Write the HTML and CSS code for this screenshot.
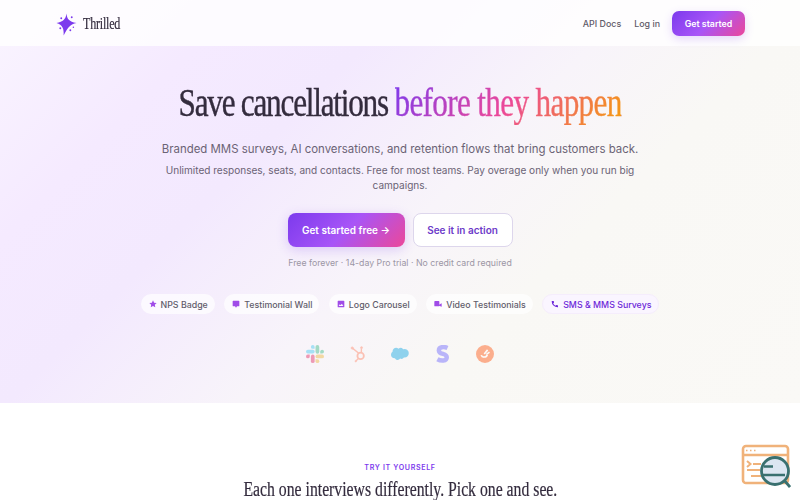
FILE: index.html
```html
<!DOCTYPE html>
<html lang="en">
<head>
  <meta charset="UTF-8" />
  <meta name="viewport" content="width=device-width, initial-scale=1.0" />
  <title>Thrilled</title>
  <link rel="stylesheet" href="styles.css">
</head>
<body>

  <!-- Hero with navigation -->
  <div class="hero-bg">
    <nav class="nav">
      <a class="brand">
        <svg class="brand-icon" viewBox="0 0 22 24" fill="#7c3aed">
          <path d="M11 1C11.700 7 13.500 9.400 21.500 11C15 12.500 12.800 15 8 24C8.400 17 7 13 .5 11C7.500 9.400 10 7.500 11 1Z"/>
          <circle cx="5.500" cy="6" r="1"/>
          <circle cx="16.500" cy="5" r="1"/>
          <circle cx="4.500" cy="16.500" r="1"/>
          <circle cx="15" cy="18.500" r="1"/>
          <circle cx="18.200" cy="15.500" r=".8"/>
        </svg>
        <span class="brand-name">Thrilled</span>
      </a>
      <div class="nav-links">
        <a>API Docs</a>
        <a>Log in</a>
        <a class="btn-small">Get started</a>
      </div>
    </nav>

    <section class="hero">
      <h1><span class="title">Save cancellations <span class="gradient-text">before they happen</span></span></h1>
      <p class="lead">Branded MMS surveys, AI conversations, and retention flows that bring customers back.</p>
      <p class="sub">Unlimited responses, seats, and contacts. Free for most teams. Pay overage only when you run big campaigns.</p>
      <div class="buttons">
        <a class="btn btn-primary">Get started free →</a>
        <a class="btn btn-secondary">See it in action</a>
      </div>
      <p class="note">Free forever · 14-day Pro trial · No credit card required</p>

      <div class="pills">
        <span class="pill">
          <svg viewBox="0 0 24 24"><path d="M12 1l3.300 7.200 7.700.9-5.700 5.300 1.500 7.700L12 18.300 5.200 22.100l1.500-7.700L1 9.100l7.700-.9z"/></svg>
          NPS Badge
        </span>
        <span class="pill">
          <svg viewBox="0 0 24 24"><path d="M4 2h16a2 2 0 0 1 2 2v13a2 2 0 0 1-2 2h-5l-3 4-3-4H4a2 2 0 0 1-2-2V4a2 2 0 0 1 2-2z"/></svg>
          Testimonial Wall
        </span>
        <span class="pill">
          <svg viewBox="0 0 24 24"><path fill-rule="evenodd" d="M4 2h16a2 2 0 0 1 2 2v16a2 2 0 0 1-2 2H4a2 2 0 0 1-2-2V4a2 2 0 0 1 2-2zm1 16h14l-4.500-7-3.500 4.500-2.500-3z"/></svg>
          Logo Carousel
        </span>
        <span class="pill">
          <svg viewBox="0 0 24 24"><path d="M3 3h11a2 2 0 0 1 2 2v12a2 2 0 0 1-2 2H3a2 2 0 0 1-2-2V5a2 2 0 0 1 2-2z"/><path d="M15 14l8-4v10l-8-3z"/></svg>
          Video Testimonials
        </span>
        <span class="pill pill-active">
          <svg viewBox="0 0 24 24"><path d="M6.600 10.800a15 15 0 0 0 6.600 6.600l2.200-2.200a1 1 0 0 1 1-.2c1.100.4 2.300.6 3.600.6a1 1 0 0 1 1 1V21a1 1 0 0 1-1 1A18 18 0 0 1 2 4a1 1 0 0 1 1-1h4.500a1 1 0 0 1 1 1c0 1.300.2 2.500.6 3.600a1 1 0 0 1-.3 1z"/></svg>
          SMS &amp; MMS Surveys
        </span>
      </div>

      <!-- Integrations -->
      <div class="logos">
        <svg viewBox="0 0 24 24">
          <g fill="#36c5f0"><rect x="0" y="6.300" width="11.500" height="5" rx="2.500"/><path d="M9 0a2.500 2.500 0 0 1 2.500 2.500V5H9a2.500 2.500 0 0 1 0-5z"/></g>
          <g fill="#2eb67d"><rect x="12.700" y="0" width="5" height="11.500" rx="2.500"/><path d="M24 8.800a2.500 2.500 0 0 1-2.500 2.500H19V8.800a2.500 2.500 0 0 1 5 0z"/></g>
          <g fill="#ecb22e"><rect x="12.700" y="12.700" width="11.300" height="5" rx="2.500"/><path d="M15.200 24a2.500 2.500 0 0 1-2.500-2.500V19h2.500a2.500 2.500 0 0 1 0 5z"/></g>
          <g fill="#e01e5a"><rect x="6.500" y="12.700" width="5" height="11.300" rx="2.500"/><path d="M0 15.200a2.500 2.500 0 0 1 2.500-2.500H5v2.500a2.500 2.500 0 0 1-5 0z"/></g>
        </svg>
        <svg viewBox="0 0 24 24" fill="none" stroke="#ff7a59">
          <circle cx="15.500" cy="14.500" r="4.300" stroke-width="2.400"/>
          <path d="M5 4.500l8 6.500M16.500 10V4.500M12.500 18l-3 3" stroke-width="1.800"/>
          <circle cx="4.300" cy="4" r="1.500" fill="#ff7a59"/>
          <circle cx="16.700" cy="3.500" r="1.300" fill="#ff7a59"/>
          <circle cx="9" cy="21.500" r="1" fill="#ff7a59"/>
        </svg>
        <svg viewBox="0 0 24 24" fill="#00a1e0">
          <path d="M10 5a4.300 4.300 0 0 1 6.200.6 5.500 5.500 0 0 1 7.500 5.500c0 3.700-3 6.300-6.500 5.600-1 1.800-3.200 2.300-5 1.400-1.600 2.700-5.700 2.500-6.900-.5C2.400 18 0 15.700 0 12.900c0-1.600.8-3 2.100-4C1.700 4.700 6.800 1.700 10 5z"/>
        </svg>
        <svg viewBox="0 0 24 24" fill="none" stroke="#635bff">
          <path d="M18 4C13.500 2 6.500 2 6.500 7.200c0 6 10.500 3.400 10.500 9 0 5.700-8 5.200-12.500 2.800" stroke-width="6"/>
        </svg>
        <svg viewBox="0 0 24 24">
          <circle cx="12" cy="12" r="12" fill="#ff4a00"/>
          <path d="M7 13.500c1 3.500 7 3.500 8-.5M11 12l4.500-5.500M14 12.500l4-3" fill="none" stroke="#fff" stroke-width="2.200"/>
        </svg>
      </div>
    </section>
  </div>

  <!-- Try it section -->
  <section class="try">
    <p class="eyebrow">Try it yourself</p>
    <h2><span class="title">Each one interviews differently. Pick one and see.</span></h2>
  </section>

  <!-- Floating widget -->
  <svg class="widget" viewBox="0 0 50 46">
    <g fill="none" stroke="#f0b27a" stroke-width="2.600">
      <rect x="2" y="2" width="45" height="37" rx="3" fill="#fff"/>
      <path d="M2 11h45"/>
      <path d="M6 17l3.500 3L6 23M12 20h8M6 26h13M10 32h10" stroke-width="2"/>
      <path d="M5 6.500h1.500M9 6.500h1.500M13 6.500h1.500" stroke-width="1.500"/>
    </g>
    <g stroke="#39706f" stroke-width="2.800">
      <path d="M43 36l6 7"/>
      <circle cx="34" cy="27" r="13.500" fill="#dce6f1"/>
      <path d="M23 22.500h9M22 31h22" stroke-width="2.400"/>
    </g>
  </svg>

</body>
</html>
```
FILE: styles.css
```css
* {
  box-sizing: border-box;
}

body {
  margin: 0;
  height: 500px;
  overflow: hidden;
  font-family: Inter, sans-serif;
  background: #fff;
  color: #342c3e;
}

h1, h2, p {
  margin: 0;
}

.hero-bg {
  height: 402.500px;
  background: linear-gradient(135deg, #faf5ff 0%, #f5eaff 20%, #f3e9fe 34%, #f8f4fa 53%, #f9f8f5 68%, #faf9f6 100%);
}

.nav {
  height: 46px;
  padding: 1px 55px 0 56px;
  display: flex;
  align-items: center;
  justify-content: space-between;
  background: rgba(255, 255, 255, 0.8);
}

.brand {
  display: flex;
  align-items: center;
  gap: 6px;
}

.brand-icon {
  width: 21px;
  height: 24px;
}

.brand-name {
  font-family: "Liberation Serif", serif;
  font-size: 17px;
  line-height: 20px;
  letter-spacing: -0.3px;
  transform: scaleX(0.71);
  transform-origin: left;
  -webkit-text-stroke: 0.2px;
}

.nav-links {
  display: flex;
  align-items: center;
  gap: 13px;
  font-size: 8.900px;
  font-weight: 500;
  color: #5f5a68;
}

.btn-small {
  width: 73px;
  height: 25px;
  line-height: 25px;
  margin-left: -1px;
  border-radius: 7px;
  text-align: center;
  font-weight: 600;
  font-size: 8.800px;
  color: #fff;
  background: linear-gradient(135deg, #7c3aed 0%, #a855f7 50%, #ec4899 100%);
  box-shadow: 0 3px 10px rgba(124, 58, 237, 0.2);
}

.hero {
  display: flex;
  flex-direction: column;
  align-items: center;
  text-align: center;
  padding-top: 34px;
}

.title {
  display: inline-block;
  white-space: nowrap;
}

h1 {
  font-family: "Liberation Serif", serif;
  font-weight: 400;
  font-size: 40px;
  line-height: 46px;
}

h1 .title {
  letter-spacing: -1.560px;
  transform: scaleX(0.78);
  -webkit-text-stroke: 0.4px;
}

.gradient-text {
  letter-spacing: -0.850px;
  background: linear-gradient(135deg, #7c3aed 0%, #ec4899 50%, #f59e0b 100%);
  -webkit-background-clip: text;
  background-clip: text;
  color: transparent;
}

.lead {
  margin-top: 13px;
  font-size: 11.430px;
  line-height: 20px;
  color: #6b6375;
}

.sub {
  width: 480px;
  margin-top: 4px;
  font-size: 10.050px;
  line-height: 15px;
  color: #6b6375;
}

.buttons {
  display: flex;
  gap: 8px;
  margin-top: 19.500px;
}

.btn {
  height: 34px;
  line-height: 34px;
  border-radius: 8px;
  font-size: 10px;
  font-weight: 600;
}

.btn-primary {
  width: 117px;
  color: #fff;
  background: linear-gradient(135deg, #7c3aed 0%, #a855f7 50%, #ec4899 100%);
  box-shadow: 0 3px 12px rgba(124, 58, 237, 0.22);
}

.btn-secondary {
  width: 100px;
  line-height: 33px;
  color: #6d3bc9;
  background: #fff;
  border: 1px solid #ddd6ec;
}

.note {
  margin-top: 9.500px;
  font-size: 8.760px;
  line-height: 14px;
  color: #9c96a5;
}

.pills {
  display: flex;
  gap: 9.400px;
  margin-top: 24px;
}

.pill {
  display: flex;
  align-items: center;
  gap: 4px;
  height: 20px;
  padding: 0 7px 0 8px;
  border-radius: 10px;
  font-size: 8.820px;
  font-weight: 500;
  white-space: nowrap;
  color: #625c6b;
  background: rgba(255, 255, 255, 0.7);
}

.pill svg {
  width: 8px;
  height: 8px;
  fill: #a04ce8;
}

.pill-active {
  color: #6d28d9;
  background: #faf5ff;
  border: 1px solid #f5edfc;
}

.pill-active svg {
  fill: #6d28d9;
}

.logos {
  display: flex;
  gap: 24.500px;
  margin-top: 31px;
  opacity: 0.42;
}

.logos svg {
  width: 18px;
  height: 18px;
}

.try {
  padding-top: 59.500px;
  text-align: center;
}

.eyebrow {
  font-size: 7.100px;
  line-height: 11px;
  font-weight: 600;
  letter-spacing: 0.650px;
  text-transform: uppercase;
  color: #7c3aed;
}

h2 {
  margin-top: 4px;
  font-family: "Liberation Serif", serif;
  font-weight: 400;
  font-size: 20px;
  line-height: 24px;
}

h2 .title {
  transform: scaleX(0.787);
  -webkit-text-stroke: 0.2px;
}

.widget {
  position: fixed;
  right: 9px;
  bottom: 10px;
  width: 50px;
  height: 46px;
}
```
